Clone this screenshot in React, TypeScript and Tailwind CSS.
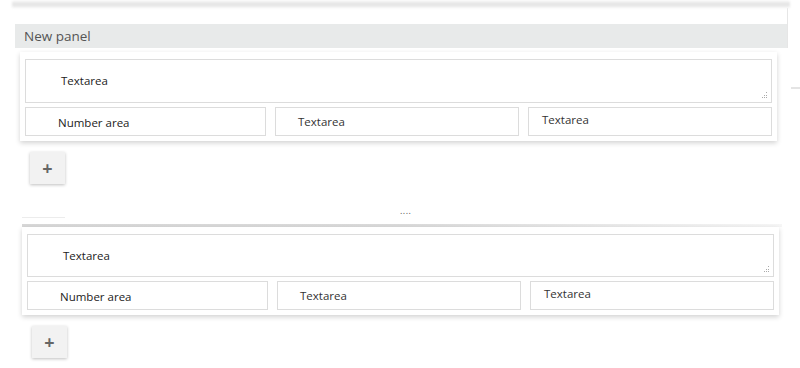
const FONT = "font-['Open_Sans','Segoe_UI',sans-serif]";

function Grip() {
  return (
    <svg width="7" height="7" viewBox="0 0 7 7" className="absolute bottom-[3px] right-[3px]">
      <rect x="5" y="0" width="1" height="1" fill="#aaa" />
      <rect x="3" y="3" width="1" height="1" fill="#aaa" />
      <rect x="5" y="3" width="1" height="1" fill="#aaa" />
      <rect x="1" y="5" width="1" height="1" fill="#aaa" />
      <rect x="3" y="5" width="1" height="1" fill="#aaa" />
      <rect x="5" y="5" width="1" height="1" fill="#aaa" />
    </svg>
  );
}

function FieldRow() {
  return (
    <div className="mt-[4px] grid h-[29px] grid-cols-[241px_1fr_1fr] gap-[9px] text-[11.5px]">
      <div className="flex items-center border border-[#dcdcdc] pl-[32px] pt-[3px] text-[#222]">
        Number area
      </div>
      <div className="flex items-center border border-[#dcdcdc] pl-[22px] text-[#333]">
        Textarea
      </div>
      <div className="flex items-start border border-[#dcdcdc] pl-[13px] pt-[3px] text-[#333]">
        Textarea
      </div>
    </div>
  );
}

function Card({ h }: { h: number }) {
  return (
    <div className="w-[757px] bg-white px-[5px] pb-[5px] pt-[7px] shadow-[0_2px_5px_rgba(0,0,0,0.18)]">
      <div
        className="relative flex items-center border border-[#dcdcdc] pl-[35px] text-[11.5px] text-[#222]"
        style={{ height: h }}
      >
        Textarea
        <Grip />
      </div>
      <FieldRow />
    </div>
  );
}

function PlusButton() {
  return (
    <div className="flex h-[32px] w-[35px] items-center justify-center bg-[#f2f2f2] text-[18px] font-bold leading-none text-[#666] shadow-[0_1px_3px_rgba(0,0,0,0.25)]">
      +
    </div>
  );
}

export default function App() {
  return (
    <div className={`h-[368px] w-[800px] overflow-hidden bg-white ${FONT}`}>
      {/* top shadow band */}
      <div className="ml-[12px] h-[8px] w-[778px] bg-gradient-to-b from-white via-[#e2e2e2] to-[#f6f6f6] blur-[1px]" />
      <div className="flex h-[40px] items-start">
        <div className="ml-[15px] w-[773px] border-r border-[#e6e6e6]">
          <div className="h-[16px] bg-white" />
          <div className="flex h-[24px] items-center bg-[#e8eaea] pl-[9px] text-[13.5px] text-[#555]">New panel</div>
        </div>
        <div className="ml-[3px] mt-[79px] h-[2px] w-[9px] shrink-0 bg-[#e4e4e4]" />
      </div>
      <div className="ml-[20px] mt-[4px]">
        <Card h={44} />
      </div>
      <div className="ml-[30px] mt-[11px]">
        <PlusButton />
      </div>

      {/* separator */}
      <div className="mt-[14px] flex h-[20px] items-end pl-[22px]">
        <div className="h-[18px] w-[43px] border-b border-[#ececec] bg-white" />
        <div className="ml-[335px] pb-[1px] text-[9px] tracking-[0.5px] text-[#555]">....</div>
      </div>
      <div className="ml-[22px] mt-[6px] h-[3px] w-[760px] bg-gradient-to-r from-[#d8d8d8] via-[#dadada] to-[#f6f6f6]" />

      <div className="ml-[22px]">
        <Card h={43} />
      </div>
      <div className="ml-[32px] mt-[11px]">
        <PlusButton />
      </div>
    </div>
  );
}
